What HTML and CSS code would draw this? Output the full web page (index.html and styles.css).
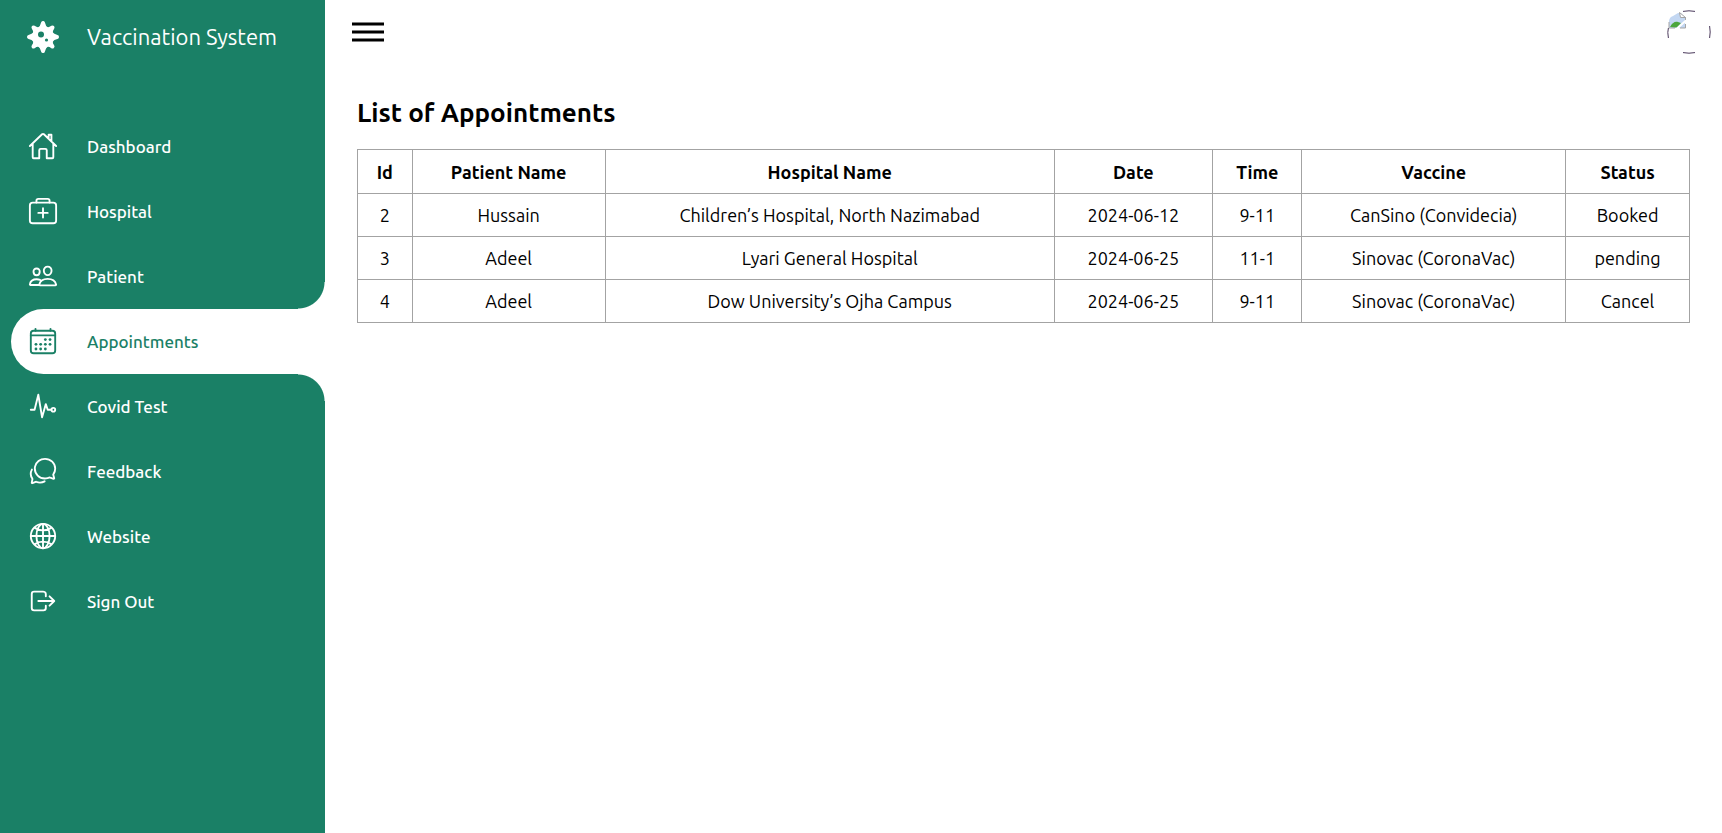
FILE: index.html
```html
<!DOCTYPE html>
<html lang="en">
<head>
<meta charset="utf-8">
<meta name="viewport" content="width=device-width, initial-scale=1">
<title>Vaccination System</title>
<link rel="stylesheet" href="styles.css">
</head>
<body>
<div class="layout">
  <nav class="sidebar" aria-label="Main">
    <a class="nav-link brand" href="#">
      <span class="nav-icon"><svg class="logo" viewBox="0 0 32 32" aria-hidden="true">
        <path fill="currentColor" stroke="currentColor" stroke-width="4" stroke-linejoin="round" d="M16 2Q18.300 11.500 25.500 6.500Q20.500 13.700 30 16Q20.500 18.300 25.500 25.500Q18.300 20.500 16 30Q13.700 20.500 6.500 25.500Q11.500 18.300 2 16Q11.500 13.700 6.500 6.500Q13.700 11.500 16 2Z"/>
        <circle class="hole" cx="14" cy="13.500" r="3"/><circle class="hole" cx="19.500" cy="19" r="1.600"/>
      </svg></span>
      <span class="nav-text">Vaccination System</span>
    </a>
    <ul class="nav-list">
      <li class="nav-item"><a class="nav-link" href="#"><span class="nav-icon"><svg class="icon" viewBox="0 0 512 512" aria-hidden="true"><path d="M80 212v236a16 16 0 0016 16h96V328a24 24 0 0124-24h80a24 24 0 0124 24v136h96a16 16 0 0016-16V212M480 256L266.89 52c-5-5.28-16.69-5.34-21.78 0L32 256M400 179V64h-48v69"/></svg></span><span class="nav-text">Dashboard</span></a></li>
      <li class="nav-item"><a class="nav-link" href="#"><span class="nav-icon"><svg class="icon" viewBox="0 0 512 512" aria-hidden="true"><rect x="32" y="112" width="448" height="352" rx="48"/><path d="M144 112V80a32 32 0 0132-32h160a32 32 0 0132 32v32M256 208v160M336 288H176"/></svg></span><span class="nav-text">Hospital</span></a></li>
      <li class="nav-item"><a class="nav-link" href="#"><span class="nav-icon"><svg class="icon" viewBox="0 0 512 512" aria-hidden="true"><path d="M402 168c-2.93 40.67-33.1 72-66 72s-63.12-31.32-66-72c-3-42.31 26.37-72 66-72s69 30.46 66 72zM336 304c-65.17 0-127.84 32.37-143.54 95.41-2.08 8.34 3.15 16.59 11.72 16.59h263.65c8.57 0 13.77-8.25 11.72-16.59C463.85 335.36 401.18 304 336 304zM200 185.94c-2.34 32.48-26.72 58.06-53 58.06s-50.7-25.57-53-58.06C91.61 152.15 115.34 128 147 128s55.39 24.77 53 57.94zM206 322c-18.05-8.27-37.93-11.45-59-11.45-52 0-102.100 25.850-114.650 82-1.650 6.660 2.530 17.450 9.370 17.450H176"/></svg></span><span class="nav-text">Patient</span></a></li>
      <li class="nav-item active"><a class="nav-link" href="#" aria-current="page"><span class="nav-icon"><svg class="icon" viewBox="0 0 512 512" aria-hidden="true"><rect x="48" y="80" width="416" height="384" rx="48"/><path d="M128 48v32M384 48v32M464 160H48"/><g class="dots"><circle cx="296" cy="232" r="24"/><circle cx="376" cy="232" r="24"/><circle cx="136" cy="312" r="24"/><circle cx="216" cy="312" r="24"/><circle cx="296" cy="312" r="24"/><circle cx="376" cy="312" r="24"/><circle cx="136" cy="392" r="24"/><circle cx="216" cy="392" r="24"/><circle cx="296" cy="392" r="24"/></g></svg></span><span class="nav-text">Appointments</span></a></li>
      <li class="nav-item"><a class="nav-link" href="#"><span class="nav-icon"><svg class="icon" viewBox="0 0 512 512" aria-hidden="true"><path d="M48 320h64l64-256 64 384 64-224 32 96h64"/><circle cx="432" cy="320" r="32"/></svg></span><span class="nav-text">Covid Test</span></a></li>
      <li class="nav-item"><a class="nav-link" href="#"><span class="nav-icon"><svg class="icon" viewBox="0 0 512 512" aria-hidden="true"><path d="M431 320.6c-1-3.6 1.2-8.6 3.3-12.2a33.68 33.68 0 012.1-3.1A162 162 0 00464 215c.3-92.2-77.5-167-173.7-167-83.9 0-153.9 57.1-170.3 132.9a160.7 160.7 0 00-3.7 34.2c0 92.3 74.8 169.1 171 169.1 15.3 0 35.9-4.6 47.2-7.7s22.5-7.2 25.4-8.3a26.44 26.44 0 019.3-1.7 26 26 0 0110.1 2l56.7 20.1a13.52 13.52 0 003.9 1 8 8 0 008-8 12.85 12.85 0 00-.5-2.7zM66.46 232a146.23 146.23 0 006.39 152.67c2.31 3.49 3.61 6.19 3.21 8s-11.93 61.87-11.93 61.87a8 8 0 002.71 7.68A8.17 8.17 0 0072 464a7.26 7.26 0 002.91-.6l56.21-22a15.7 15.7 0 0112 .2c18.94 7.38 39.88 12 60.83 12A159.21 159.21 0 00284 432.11"/></svg></span><span class="nav-text">Feedback</span></a></li>
      <li class="nav-item"><a class="nav-link" href="#"><span class="nav-icon"><svg class="icon" viewBox="0 0 512 512" aria-hidden="true"><circle cx="256" cy="256" r="208"/><path d="M256 48c-58.07 0-112.67 93.13-112.67 208S197.93 464 256 464s112.67-93.13 112.67-208S314.07 48 256 48zM117.33 117.33c38.24 27.15 86.38 43.34 138.67 43.34s100.43-16.19 138.67-43.34M394.67 394.67c-38.24-27.15-86.38-43.34-138.67-43.34s-100.43 16.19-138.67 43.34M256 48v416M464 256H48"/></svg></span><span class="nav-text">Website</span></a></li>
      <li class="nav-item"><a class="nav-link" href="#"><span class="nav-icon"><svg class="icon" viewBox="0 0 512 512" aria-hidden="true"><path d="M304 336v40a40 40 0 01-40 40H104a40 40 0 01-40-40V136a40 40 0 0140-40h152c22.09 0 48 17.91 48 40v40M368 336l80-80-80-80M176 256h256"/></svg></span><span class="nav-text">Sign Out</span></a></li>
    </ul>
  </nav>
  <div class="page">
    <header class="topbar">
      <button class="menu-toggle" type="button" aria-label="Toggle menu"><svg viewBox="0 0 32 20" aria-hidden="true"><path d="M0 2h32M0 10h32M0 18h32"/></svg></button>
      <a class="avatar" href="#" aria-label="Profile"><svg viewBox="0 0 44 44" aria-hidden="true">
        <path fill="#c3d7f2" d="M2 18V11a6 6 0 014-5l5-3h3l4 5v10z"/>
        <path fill="#fff" stroke="#a5a5a5" d="M12.500 2.500l6 5h-5z"/>
        <path fill="none" stroke="#a5a5a5" d="M2 12v6h6M18.500 7v3M13 18h5.500v-4"/>
        <path fill="#4ba63c" d="M3 17c2-4 5-6 8-5l3 1-4 4.500z"/>
        <path stroke="#fff" stroke-width="2" d="M10 18.500l9-8"/>
        <path class="rim" d="M16 1.400Q22 .2 28 1.400M16 42.600Q22 43.800 28 42.600M1.400 18Q.2 22 1.400 28M42.600 16Q43.800 22 42.600 28"/>
      </svg></a>
    </header>
    <main class="content">
      <h1 class="title">List of Appointments</h1>
      <table class="appointments">
        <colgroup><col class="c-id"><col class="c-patient"><col class="c-hospital"><col class="c-date"><col class="c-time"><col class="c-vaccine"><col class="c-status"></colgroup>
        <thead><tr><th scope="col">Id</th><th scope="col">Patient Name</th><th scope="col">Hospital Name</th><th scope="col">Date</th><th scope="col">Time</th><th scope="col">Vaccine</th><th scope="col">Status</th></tr></thead>
        <tbody>
          <tr><td>2</td><td>Hussain</td><td>Children’s Hospital, North Nazimabad</td><td>2024-06-12</td><td>9-11</td><td>CanSino (Convidecia)</td><td>Booked</td></tr>
          <tr><td>3</td><td>Adeel</td><td>Lyari General Hospital</td><td>2024-06-25</td><td>11-1</td><td>Sinovac (CoronaVac)</td><td>pending</td></tr>
          <tr><td>4</td><td>Adeel</td><td>Dow University’s Ojha Campus</td><td>2024-06-25</td><td>9-11</td><td>Sinovac (CoronaVac)</td><td>Cancel</td></tr>
        </tbody>
      </table>
    </main>
  </div>
</div>
</body>
</html>
```

FILE: styles.css
```css
:root {
  --green: #1a8066;
  --white: #fff;
}

* {
  box-sizing: border-box;
  margin: 0;
  padding: 0;
}

body {
  font: 17px/24px Ubuntu, "Noto Sans", sans-serif;
  color: #000;
  background: var(--white);
}

.layout {
  display: flex;
  min-height: 100vh;
}

.sidebar {
  flex: 0 0 325px;
  padding: 5px 0 0 11px;
  background: var(--green);
}

.nav-list {
  list-style: none;
  font-weight: 500;
}

.nav-item {
  position: relative;
  border-radius: 33px 0 0 33px;
}

.nav-link {
  display: flex;
  align-items: center;
  gap: 12px;
  height: 65px;
  color: var(--white);
  text-decoration: none;
}

.brand {
  height: 64px;
  margin-bottom: 45px;
  font-size: 22px;
}

.nav-icon {
  display: flex;
  justify-content: center;
  flex: 0 0 64px;
}

.nav-item .nav-icon {
  padding-bottom: 2px;
}

.icon {
  width: 30px;
  height: 30px;
  fill: none;
  stroke: currentColor;
  stroke-width: 32;
  stroke-linecap: round;
  stroke-linejoin: round;
}

.dots {
  fill: currentColor;
  stroke: none;
}

.logo {
  width: 32px;
  height: 32px;
  overflow: visible;
}

.hole {
  fill: var(--green);
}

.active {
  background: var(--white);
}

.active .nav-link {
  color: var(--green);
}

/* Concave corners joining the active item to the page */
.active::before,
.active::after {
  content: "";
  position: absolute;
  right: 0;
  width: 27px;
  height: 27px;
}

.active::before {
  bottom: 100%;
  background: radial-gradient(circle at 0 0, transparent 26px, var(--white) 27px);
}

.active::after {
  top: 100%;
  background: radial-gradient(circle at 0 100%, transparent 26px, var(--white) 27px);
}

.page {
  flex: 1;
  min-width: 0;
}

.topbar {
  display: flex;
  align-items: center;
  justify-content: space-between;
  height: 64px;
  padding: 0 11px 0 27px;
}

.menu-toggle {
  border: 0;
  background: none;
  cursor: pointer;
}

.menu-toggle svg {
  display: block;
  width: 32px;
  height: 20px;
  stroke: #000;
  stroke-width: 3;
}

.avatar svg {
  display: block;
  width: 44px;
  height: 44px;
}

.rim {
  fill: none;
  stroke: #4b3a5c;
}

.content {
  padding: 33px 32px;
}

.title {
  margin-bottom: 20px;
  font-size: 26px;
  line-height: 32px;
}

.appointments {
  width: 100%;
  table-layout: fixed;
  border-collapse: collapse;
  font-size: 18px;
  text-align: center;
}

.appointments th,
.appointments td {
  height: 43px;
  padding: 9px 4px;
  border: 1px solid #a3a3a3;
}

.appointments th {
  height: 44px;
}

.c-id { width: 4.1%; }
.c-patient { width: 14.5%; }
.c-hospital { width: 33.7%; }
.c-date { width: 11.9%; }
.c-time { width: 6.7%; }
.c-vaccine { width: 19.8%; }
.c-status { width: 9.3%; }
```
